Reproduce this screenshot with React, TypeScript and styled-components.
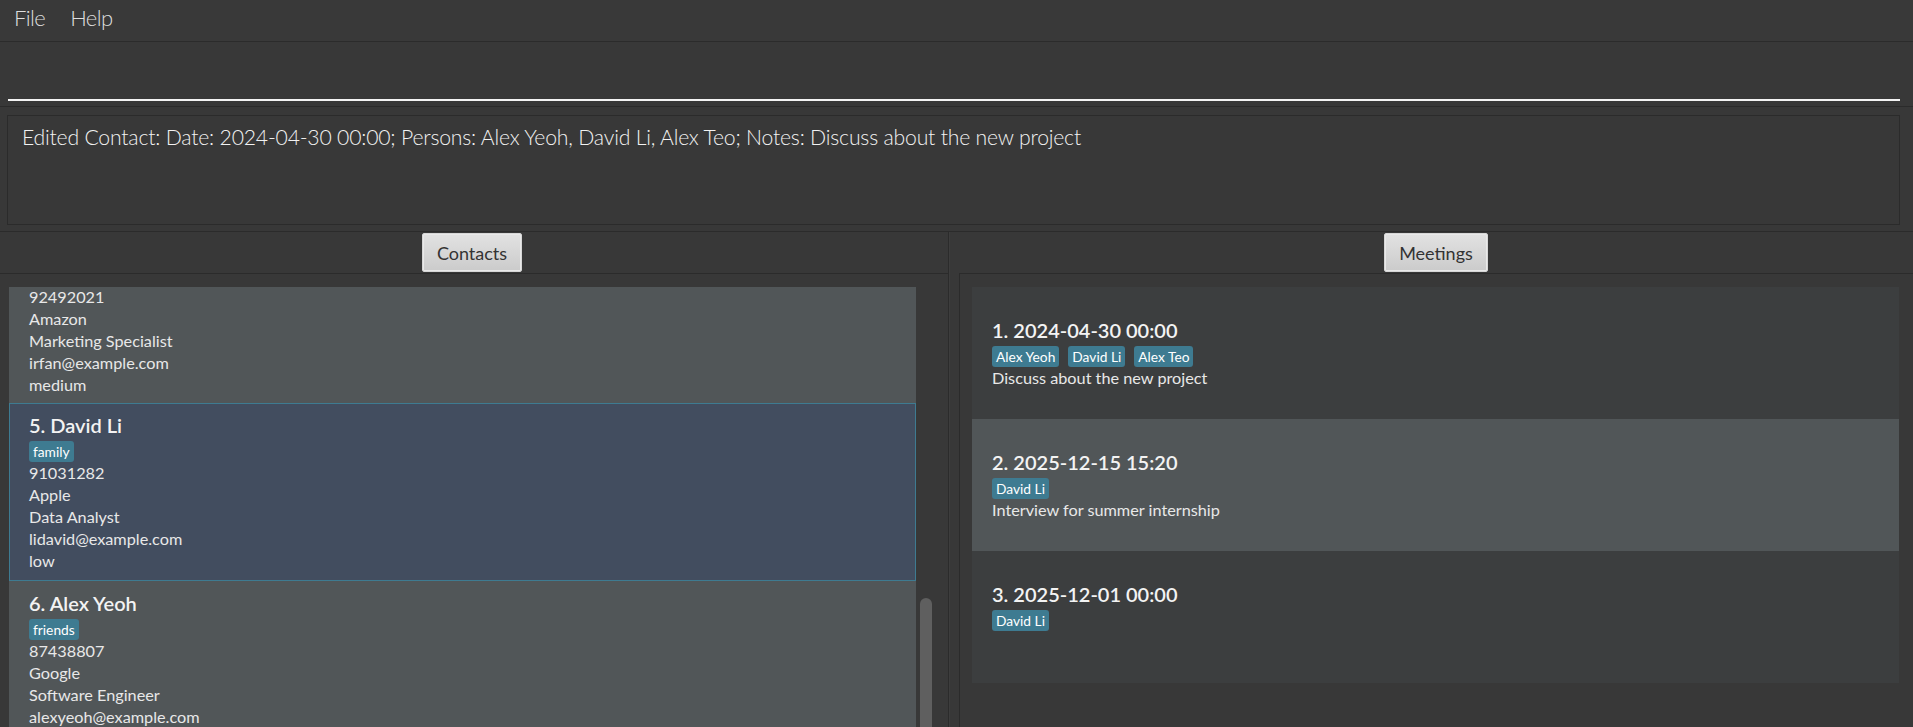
import React from "react";
import styled, { createGlobalStyle } from "styled-components";

const GlobalStyle = createGlobalStyle`
  html, body { margin: 0; padding: 0; background: #383838; }
  body { font-family: Lato, "Open Sans", sans-serif; overflow: hidden; }
  * { box-sizing: border-box; }
`;

const Window = styled.div`
  width: 1913px;
  height: 727px;
  display: flex;
  flex-direction: column;
  overflow: hidden;
  background: #383838;
`;

const MenuBar = styled.div`
  flex: 0 0 42px;
  display: flex;
  align-items: flex-start;
  gap: 25px;
  padding-left: 14px;
  background: #393939;
  border-bottom: 1px solid #2b2b2b;
`;

const MenuItem = styled.span`
  font-weight: 300;
  font-size: 22px;
  letter-spacing: -0.6px;
  line-height: 36px;
  color: #dedede;
`;

const CommandPane = styled.div`
  flex: 0 0 65px;
  display: flex;
  align-items: flex-end;
  padding: 0 13px 5px 8px;
  border-bottom: 1px solid #2b2b2b;
`;

const CommandInput = styled.input`
  width: 100%;
  height: 40px;
  background: transparent;
  border: none;
  border-bottom: 2px solid #f4f4f4;
  outline: none;
  color: #fff;
  font-family: Lato, sans-serif;
  font-weight: 300;
  font-size: 21px;
  padding: 0 6px;
`;

const ResultPane = styled.div`
  flex: 0 0 124px;
  padding: 8px 13px 0 7px;
`;

const ResultBox = styled.div`
  height: 110px;
  border: 1px solid #2b2b2b;
  padding: 8px 14px;
  font-weight: 300;
  font-size: 21.2px;
  letter-spacing: -0.2px;
  line-height: 26px;
  color: #f2f2f2;
`;

const Panels = styled.div`
  flex: 1;
  min-height: 0;
  display: flex;
  border-top: 1px solid #2b2b2b;
`;

const Pane = styled.div<{ $width?: number; $padLeft?: number }>`
  ${(p) => (p.$width ? `flex: 0 0 ${p.$width}px;` : "flex: 1;")}
  min-width: 0;
  display: flex;
  flex-direction: column;
  padding-left: ${(p) => p.$padLeft ?? 0}px;
`;

const Divider = styled.div`
  flex: 0 0 2px;
  border-left: 1px solid #2b2b2b;
  background: #3d3d3d;
`;

const PaneHeader = styled.div<{ $padRight?: number }>`
  flex: 0 0 42px;
  display: flex;
  justify-content: center;
  align-items: flex-start;
  padding-top: 1px;
  padding-right: ${(p) => p.$padRight ?? 0}px;
  border-bottom: 1px solid #2b2b2b;
`;

const TabButton = styled.div`
  height: 39px;
  padding: 0 14px;
  display: flex;
  align-items: center;
  font-size: 18px;
  color: #333;
  background: linear-gradient(#e2e2e2, #cbcbcb);
  border: 1px solid #d6d6d6;
  box-shadow: inset 0 0 0 1px #e9e9e9;
  border-radius: 2px;
`;

const ContactArea = styled.div`
  flex: 1;
  min-height: 0;
  display: flex;
  padding: 13px 16px 0 9px;
  overflow: hidden;
`;

const ContactColumn = styled.div`
  flex: 1;
  min-width: 0;
  overflow: hidden;
`;

const ContactScroller = styled.div<{ $scrollTop: number }>`
  margin-top: -${(p) => p.$scrollTop}px;
`;

const ScrollTrack = styled.div`
  flex: 0 0 12px;
  margin-left: 4px;
  padding-top: 311px;
`;

const ScrollThumb = styled.div`
  height: 240px;
  border-radius: 6px;
  background: #5f5f5f;
`;

type Variant = "even" | "odd" | "selected";

const cardBg: Record<Variant, string> = {
  even: "#3c3e3f",
  odd: "#515658",
  selected: "#424d5f",
};

const ContactCard = styled.div<{ $variant: Variant; $partial?: boolean }>`
  background: ${(p) => cardBg[p.$variant]};
  border: 1px solid ${(p) => (p.$variant === "selected" ? "#3e7b91" : cardBg[p.$variant])};
  padding: ${(p) => (p.$partial ? "0 19px 6px" : "8px 19px 8px")};
`;

const MeetingArea = styled.div`
  flex: 1;
  min-height: 0;
  display: flex;
  flex-direction: column;
  padding: 13px 14px 0 12px;
  border-left: 1px solid #2b2b2b;
  overflow: hidden;
`;

const MeetingCard = styled.div<{ $odd: boolean }>`
  flex: 0 0 132px;
  padding: 30px 20px 0;
  background: ${(p) => (p.$odd ? "#515658" : "#3c3e3f")};
`;

const CardTitle = styled.div`
  font-weight: 600;
  font-size: 20px;
  line-height: 26px;
  color: #f3f3f3;
`;

const TagRow = styled.div`
  display: flex;
  gap: 9px;
  margin-top: 3px;
  height: 21px;
`;

const Tag = styled.span`
  font-size: 13.75px;
  line-height: 19px;
  padding: 1px 4px;
  background: #3e7b91;
  color: #fff;
  border-radius: 3px;
`;

const InfoLine = styled.div`
  font-size: 16.25px;
  line-height: 22px;
  color: #e8e8e8;
`;

type Contact = {
  index?: number;
  name?: string;
  tags?: string[];
  lines: string[];
  variant: Variant;
  partial?: boolean;
};

const contacts: Contact[] = [
  {
    lines: ["92492021", "Amazon", "Marketing Specialist", "irfan@example.com", "medium"],
    variant: "odd",
    partial: true,
  },
  {
    index: 5,
    name: "David Li",
    tags: ["family"],
    lines: ["91031282", "Apple", "Data Analyst", "lidavid@example.com", "low"],
    variant: "selected",
  },
  {
    index: 6,
    name: "Alex Yeoh",
    tags: ["friends"],
    lines: ["87438807", "Google", "Software Engineer", "alexyeoh@example.com", "high"],
    variant: "odd",
  },
];

type Meeting = { date: string; persons: string[]; notes?: string };

const meetings: Meeting[] = [
  { date: "2024-04-30 00:00", persons: ["Alex Yeoh", "David Li", "Alex Teo"], notes: "Discuss about the new project" },
  { date: "2025-12-15 15:20", persons: ["David Li"], notes: "Interview for summer internship" },
  { date: "2025-12-01 00:00", persons: ["David Li"] },
];

export default function App() {
  return (
    <>
      <GlobalStyle />
      <Window>
        <MenuBar>
          <MenuItem>File</MenuItem>
          <MenuItem>Help</MenuItem>
        </MenuBar>
        <CommandPane>
          <CommandInput defaultValue="" />
        </CommandPane>
        <ResultPane>
          <ResultBox>
            Edited Contact: Date: 2024-04-30 00:00; Persons: Alex Yeoh, David Li, Alex Teo; Notes: Discuss about the new project
          </ResultBox>
        </ResultPane>
        <Panels>
          <Pane $width={948}>
            <PaneHeader $padRight={4}>
              <TabButton>Contacts</TabButton>
            </PaneHeader>
            <ContactArea>
              <ContactColumn>
                <ContactScroller $scrollTop={2}>
                  {contacts.map((c, i) => (
                    <ContactCard key={i} $variant={c.variant} $partial={c.partial}>
                      {c.name && (
                        <CardTitle>
                          {c.index}. {c.name}
                        </CardTitle>
                      )}
                      {c.tags && (
                        <TagRow>
                          {c.tags.map((t) => (
                            <Tag key={t}>{t}</Tag>
                          ))}
                        </TagRow>
                      )}
                      {c.lines.map((l) => (
                        <InfoLine key={l}>{l}</InfoLine>
                      ))}
                    </ContactCard>
                  ))}
                </ContactScroller>
              </ContactColumn>
              <ScrollTrack>
                <ScrollThumb />
              </ScrollTrack>
            </ContactArea>
          </Pane>
          <Divider />
          <Pane $padLeft={9}>
            <PaneHeader>
              <TabButton>Meetings</TabButton>
            </PaneHeader>
            <MeetingArea>
              {meetings.map((m, i) => (
                <MeetingCard key={i} $odd={i % 2 === 1}>
                  <CardTitle>
                    {i + 1}. {m.date}
                  </CardTitle>
                  <TagRow>
                    {m.persons.map((p) => (
                      <Tag key={p}>{p}</Tag>
                    ))}
                  </TagRow>
                  {m.notes && <InfoLine>{m.notes}</InfoLine>}
                </MeetingCard>
              ))}
            </MeetingArea>
          </Pane>
        </Panels>
      </Window>
    </>
  );
}
